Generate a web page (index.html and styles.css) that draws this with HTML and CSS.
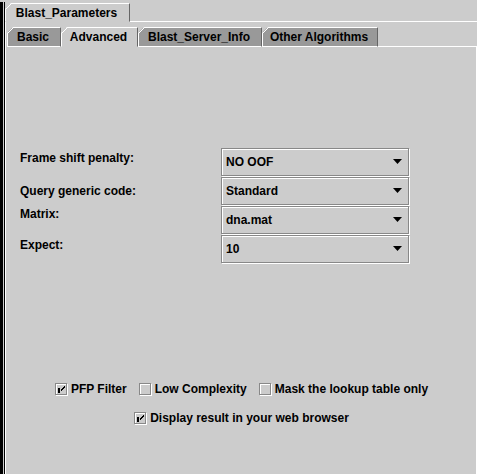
FILE: index.html
```html
<!DOCTYPE html>
<html>
<head>
<meta charset="utf-8">
<link rel="stylesheet" href="styles.css">
</head>
<body>
<div class="window">
  <div class="edge"></div>
  <div class="outer">
    <div class="tabrow outer-tabs">
      <div class="tab tab-selected otab">Blast_Parameters</div>
      <div class="tab-fill"></div>
    </div>
    <div class="outer-body">
      <div class="tabrow inner-tabs">
        <div class="tab tab-basic">Basic</div>
        <div class="tab tab-selected tab-adv">Advanced</div>
        <div class="tab tab-blast">Blast_Server_Info</div>
        <div class="tab tab-other">Other Algorithms</div>
        <div class="tab-fill"></div>
      </div>
      <div class="panel">
        <div class="form">
          <div class="lbl lbl-up4">Frame shift penalty:</div>
          <div class="combo"><span>NO OOF</span><svg class="arrow" width="9" height="5" viewBox="0 0 9 5"><polygon points="0,0 9,0 4.5,5" fill="#000"/></svg></div>
          <div class="lbl">Query generic code:</div>
          <div class="combo"><span>Standard</span><svg class="arrow" width="9" height="5" viewBox="0 0 9 5"><polygon points="0,0 9,0 4.5,5" fill="#000"/></svg></div>
          <div class="lbl lbl-up6">Matrix:</div>
          <div class="combo"><span>dna.mat</span><svg class="arrow" width="9" height="5" viewBox="0 0 9 5"><polygon points="0,0 9,0 4.5,5" fill="#000"/></svg></div>
          <div class="lbl lbl-up4">Expect:</div>
          <div class="combo"><span>10</span><svg class="arrow" width="9" height="5" viewBox="0 0 9 5"><polygon points="0,0 9,0 4.5,5" fill="#000"/></svg></div>
        </div>
        <div class="checks">
          <div class="check-row">
            <label class="check"><svg class="cb" width="13" height="13" viewBox="0 0 13 13" shape-rendering="crispEdges"><rect x="1.5" y="1.5" width="11" height="11" fill="none" stroke="#fff"/><rect x="0.5" y="0.5" width="11" height="11" fill="none" stroke="#888"/><rect x="3" y="5" width="2" height="5" fill="#000"/><path d="M9.5 3.5 L5.5 7.5 M9.5 4.5 L5.5 8.5" stroke="#000" fill="none"/></svg><span>PFP Filter</span></label>
            <label class="check"><svg class="cb" width="13" height="13" viewBox="0 0 13 13" shape-rendering="crispEdges"><rect x="1.5" y="1.5" width="11" height="11" fill="none" stroke="#fff"/><rect x="0.5" y="0.5" width="11" height="11" fill="none" stroke="#888"/></svg><span>Low Complexity</span></label>
            <label class="check"><svg class="cb" width="13" height="13" viewBox="0 0 13 13" shape-rendering="crispEdges"><rect x="1.5" y="1.5" width="11" height="11" fill="none" stroke="#fff"/><rect x="0.5" y="0.5" width="11" height="11" fill="none" stroke="#888"/></svg><span>Mask the lookup table only</span></label>
          </div>
          <div class="check-row">
            <label class="check"><svg class="cb" width="13" height="13" viewBox="0 0 13 13" shape-rendering="crispEdges"><rect x="1.5" y="1.5" width="11" height="11" fill="none" stroke="#fff"/><rect x="0.5" y="0.5" width="11" height="11" fill="none" stroke="#888"/><rect x="3" y="5" width="2" height="5" fill="#000"/><path d="M9.5 3.5 L5.5 7.5 M9.5 4.5 L5.5 8.5" stroke="#000" fill="none"/></svg><span>Display result in your web browser</span></label>
          </div>
        </div>
      </div>
    </div>
  </div>
</div>
</body>
</html>
```
FILE: styles.css
```css
html, body {
  margin: 0;
  padding: 0;
  background: #cccccc;
}
body {
  font: bold 12px "Liberation Sans", Arial, sans-serif;
  color: #000;
}
.window {
  display: flex;
  width: 477px;
  height: 474px;
  overflow: hidden;
}
.edge {
  flex: none;
  width: 5px;
  margin-top: 2px;
  background: linear-gradient(to right, #000 0 3px, #cccccc 3px 4px, #000 4px 5px);
}
.outer {
  flex: 1;
  display: flex;
  flex-direction: column;
  min-width: 0;
}
.tabrow {
  display: flex;
  align-items: flex-end;
  flex: none;
}
.outer-tabs {
  height: 22px;
}
.inner-tabs {
  height: 20px;
}
.tab-fill {
  flex: 1;
  align-self: stretch;
  border-bottom: 1px solid #fff;
}
.tab {
  position: relative;
  box-sizing: border-box;
  display: flex;
  align-items: center;
  justify-content: center;
  padding-right: 2px;
  white-space: nowrap;
  background: #999999;
  border-top: 1px solid #fff;
  border-left: 1px solid #fff;
  border-right: 1px solid #666;
  border-bottom: 1px solid #fff;
  clip-path: polygon(6px 0, 100% 0, 100% 100%, 0 100%, 0 6px);
}
.tab::before {
  content: "";
  position: absolute;
  left: -1px;
  top: -1px;
  width: 7px;
  height: 7px;
  background: linear-gradient(to bottom right, transparent 43%, #fff 43%, #fff 54%, transparent 54%);
}
.tab-selected {
  background: #cccccc;
  border-bottom-color: transparent;
}
.otab {
  width: 125px;
  height: 19px;
}
.inner-tabs .tab {
  height: 20px;
}
.tab-basic { width: 54px; }
.tab-adv { width: 77px; }
.tab-blast { width: 124px; }
.tab-other { width: 116px; }

.outer-body {
  flex: 1;
  display: flex;
  flex-direction: column;
  border-left: 1px solid #fff;
  padding: 5px 0 0 1px;
  min-height: 0;
}
.panel {
  flex: 1;
  border-right: 1px solid #fff;
  display: flex;
  flex-direction: column;
}
.form {
  display: grid;
  grid-template-columns: 201px 188px;
  row-gap: 1px;
  margin: 101px 0 0 13px;
}
.lbl {
  align-self: center;
  white-space: nowrap;
}
.lbl-up4 { padding-bottom: 8px; }
.lbl-up6 { padding-bottom: 12px; }
.combo {
  box-sizing: border-box;
  height: 28px;
  border: 1px solid #888;
  box-shadow: inset 1px 1px #fff, 1px 1px #fff;
  display: flex;
  align-items: center;
  justify-content: space-between;
  padding: 0 6px 0 4px;
}
.arrow {
  display: block;
  margin-top: -1px;
}
.checks {
  margin-top: 116px;
  display: flex;
  flex-direction: column;
  align-items: center;
  row-gap: 9px;
}
.check-row {
  display: flex;
  align-items: center;
  gap: 12px;
  height: 20px;
}
.check {
  display: flex;
  align-items: center;
  gap: 3px;
  white-space: nowrap;
}
.cb {
  display: block;
  flex: none;
}
```
